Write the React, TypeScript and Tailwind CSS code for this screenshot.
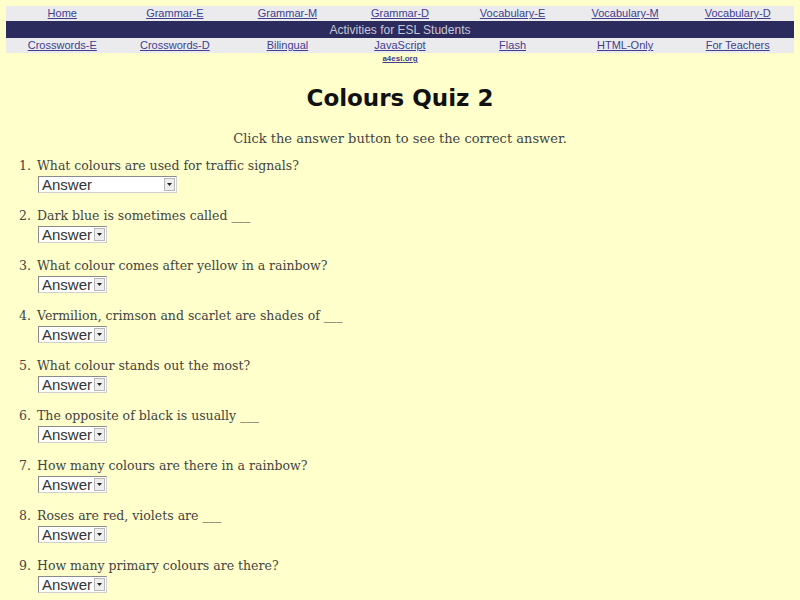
import React from 'react';

const topLinks = ['Home', 'Grammar-E', 'Grammar-M', 'Grammar-D', 'Vocabulary-E', 'Vocabulary-M', 'Vocabulary-D'];
const bottomLinks = ['Crosswords-E', 'Crosswords-D', 'Bilingual', 'JavaScript', 'Flash', 'HTML-Only', 'For Teachers'];

const questions = [
  'What colours are used for traffic signals?',
  'Dark blue is sometimes called ___',
  'What colour comes after yellow in a rainbow?',
  'Vermilion, crimson and scarlet are shades of ___',
  'What colour stands out the most?',
  'The opposite of black is usually ___',
  'How many colours are there in a rainbow?',
  'Roses are red, violets are ___',
  'How many primary colours are there?',
];

const AnswerBox = ({ wide }: { wide?: boolean }) => (
  <div
    className={`flex items-center justify-between h-[17px] bg-white border border-[#8a8a8a] border-r-[#d0d0d0] border-b-[#d0d0d0] pl-[3px] pr-[1px] ${wide ? 'w-[139px]' : 'w-[69px]'}`}
  >
    <span className="text-[15px] leading-none text-[#333] font-['Liberation_Sans',Arial,sans-serif]">Answer</span>
    <span className="flex items-center justify-center w-[11px] h-[13px] bg-[#eeeeee] border border-[#b8b8b8]">
      <svg width="5" height="3" viewBox="0 0 5 3">
        <path d="M0 0 L5 0 L2.5 3 Z" fill="#222" />
      </svg>
    </span>
  </div>
);

const App = () => {
  return (
    <div className="w-[800px] h-[600px] overflow-hidden bg-[#ffffcc] px-[6px] pt-[6px]">
      {/* nav */}
      <div className="font-['Liberation_Sans',Arial,sans-serif]">
        <div className="grid grid-cols-7 bg-[#ebebee] h-[15px] items-center">
          {topLinks.map((l) => (
            <a key={l} className="text-center text-[11px] leading-none text-[#40408f] underline">
              {l}
            </a>
          ))}
        </div>
        <div className="bg-[#2b2b5e] h-[17px] flex items-center justify-center text-[12px] text-[#c8c8d8]">
          Activities for ESL Students
        </div>
        <div className="grid grid-cols-7 bg-[#ebebee] h-[15px] items-center">
          {bottomLinks.map((l) => (
            <a key={l} className="text-center text-[11px] leading-none text-[#40408f] underline">
              {l}
            </a>
          ))}
        </div>
        <div className="grid grid-cols-7">
          <div className="col-start-4 text-center text-[8px] leading-[10px] text-[#40408f] underline font-bold mt-[1px]">
            a4esl.org
          </div>
        </div>
      </div>

      <h1 className="text-center mt-[18px] text-[23px] leading-[32px] font-bold text-[#111] font-['DejaVu_Sans',sans-serif]">
        Colours Quiz 2
      </h1>

      <p className="text-center mt-[17px] text-[13px] leading-[16px] text-[#444] font-['DejaVu_Serif',serif]">
        Click the answer button to see the correct answer.
      </p>

      <div className="mt-[11px] font-['DejaVu_Serif',serif] text-[12.5px] text-[#444]">
        {questions.map((q, i) => (
          <div key={i} className="flex h-[50px]">
            <div className="w-[31px] text-right pr-[6px] leading-[16px]">{i + 1}.</div>
            <div className="flex flex-col gap-[2px]">
              <div className="leading-[16px]">{q}</div>
              <div className="pl-[1px]">
                <AnswerBox wide={i === 0} />
              </div>
            </div>
          </div>
        ))}
      </div>
    </div>
  );
};

export default App;
